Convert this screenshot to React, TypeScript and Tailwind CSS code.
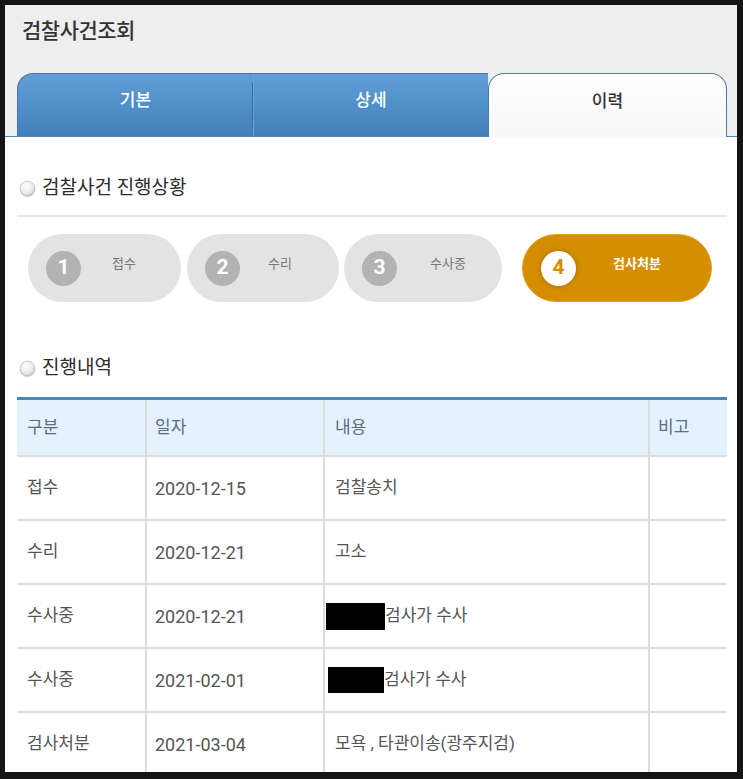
import React from "react";

const steps = [
  { n: "1", label: "접수", box: "w-[153px] ml-[11px]", gap: "ml-[31px]", active: false },
  { n: "2", label: "수리", box: "w-[152px] ml-[6px]", gap: "ml-[28px]", active: false },
  { n: "3", label: "수사중", box: "w-[158px] ml-[5px]", gap: "ml-[33px]", active: false },
  { n: "4", label: "검사처분", box: "w-[190px] ml-[20px]", gap: "ml-[37px]", active: true },
];

const rows = [
  { kind: "접수", date: "2020-12-15", body: "검찰송치", mask: "" },
  { kind: "수리", date: "2020-12-21", body: "고소", mask: "" },
  { kind: "수사중", date: "2020-12-21", body: "검사가 수사", mask: "ml-[-9px] w-[59px] h-[27px]" },
  { kind: "수사중", date: "2021-02-01", body: "검사가 수사", mask: "ml-[-7px] w-[56px] h-[26px]" },
  { kind: "검사처분", date: "2021-03-04", body: "모욕 , 타관이송(광주지검)", mask: "" },
];

function Bullet() {
  return (
    <svg width="17" height="17" viewBox="0 0 17 17" className="shrink-0">
      <defs>
        <radialGradient id="bl" cx="40%" cy="35%" r="70%">
          <stop offset="0%" stopColor="#ffffff" />
          <stop offset="65%" stopColor="#eaeaea" />
          <stop offset="100%" stopColor="#c8c8c8" />
        </radialGradient>
      </defs>
      <circle cx="8.5" cy="9.3" r="7.6" fill="#d0d0d0" />
      <circle cx="8.5" cy="8.5" r="7.4" fill="url(#bl)" stroke="#bdbdbd" strokeWidth="0.8" />
    </svg>
  );
}

function SectionTitle({ text }: { text: string }) {
  return (
    <div className="flex items-center h-[24px] pl-[2px] gap-[6px]">
      <Bullet />
      <span className="text-[19px] text-[#2b2b2b]">{text}</span>
    </div>
  );
}

export default function App() {
  return (
    <div className="w-[743px] h-[779px] bg-[#141414] pt-[5px] pl-[5px] pr-[6px] pb-[7px] font-['Roboto','Noto_Sans_CJK_KR',sans-serif]">
      <div className="w-full h-full bg-white overflow-hidden flex flex-col">
        {/* header + tabs */}
        <div className="bg-[#eeeeee] border-b border-[#5585b3]">
          <div className="pt-[14px] pl-[17px] h-[38px] text-[21px] leading-[24px] font-medium text-[#333] tracking-[-0.5px]">
            검찰사건조회
          </div>
          <div className="mt-[30px] ml-[12px] mr-[10px] h-[63px] flex">
            <div className="flex-1 flex rounded-tl-[16px] border-t border-l border-[#4677a8] bg-linear-to-b from-[#609fd5] to-[#4380bb] text-white text-[17px] font-medium">
              <div className="w-[235px] flex items-center justify-center pb-[8px] relative">
                기본
                <span className="absolute right-0 top-[9px] bottom-[8px] w-px bg-[#3a6a99]" />
              </div>
              <div className="flex-1 flex items-center justify-center pb-[8px] border-l border-[#6aa5d8]">상세</div>
            </div>
            <div className="w-[239px] mb-[-1px] rounded-t-[16px] border-t-[1.5px] border-x-[1.5px] border-[#4b7aa9] bg-linear-to-b from-white to-[#f8f8f8] flex items-center justify-center pb-[8px] text-[17px] font-medium text-[#333]">
              이력
            </div>
          </div>
        </div>

        {/* content */}
        <div className="ml-[12px] mr-[10px] pt-[39px]">
          <SectionTitle text="검찰사건 진행상황" />
          <div className="mt-[15px] h-[2px] bg-[#e6e6e6]" />

          <div className="mt-[17px] flex">
            {steps.map((s) => (
              <div
                key={s.n}
                className={`${s.box} h-[68px] rounded-full flex items-center pl-[18px] ${
                  s.active ? "bg-[#d48e00] border border-[#e0a020]" : "bg-[#e3e3e3]"
                }`}
              >
                <div
                  className={`w-[35px] h-[35px] rounded-full flex items-center justify-center text-[21px] font-bold ${
                    s.active
                      ? "bg-white text-[#d48e00] shadow-[0_0_4px_rgba(120,70,0,0.6)]"
                      : "bg-[#b3b3b3] text-white"
                  }`}
                >
                  {s.n}
                </div>
                <span
                  className={`${s.gap} mb-[9px] text-[13px] ${
                    s.active ? "text-white font-bold" : "text-[#777]"
                  }`}
                >
                  {s.label}
                </span>
              </div>
            ))}
          </div>

          <div className="mt-[54px]">
            <SectionTitle text="진행내역" />
          </div>

          <div className="mt-[17px] border-t-[3px] border-[#4a87c1] text-[17px]">
            <div className="grid grid-cols-[128px_178px_325px_79px] h-[57px] bg-[#e5f1fd] border-b-2 border-[#dcdcdc] text-[#5a6e82]">
              <div className="flex items-center pl-[10px]">구분</div>
              <div className="flex items-center pl-[8px] border-l-2 border-[#dcdcdc]">일자</div>
              <div className="flex items-center pl-[10px] border-l-2 border-[#dcdcdc]">내용</div>
              <div className="flex items-center pl-[8px] border-l-2 border-[#dcdcdc]">비고</div>
            </div>
            {rows.map((r, i) => (
              <div
                key={i}
                className="grid grid-cols-[128px_178px_325px_79px] h-[64px] border-b-2 border-[#dcdcdc] text-[#555]"
              >
                <div className="flex items-center pl-[10px]">{r.kind}</div>
                <div className="flex items-center pl-[8px] border-l-2 border-[#dcdcdc] text-[18px]">{r.date}</div>
                <div className="flex items-center pl-[10px] border-l-2 border-[#dcdcdc]">
                  {r.mask && <span className={`${r.mask} bg-black shrink-0`} />}
                  {r.body}
                </div>
                <div className="border-l-2 border-[#dcdcdc]" />
              </div>
            ))}
          </div>
        </div>
      </div>
    </div>
  );
}
